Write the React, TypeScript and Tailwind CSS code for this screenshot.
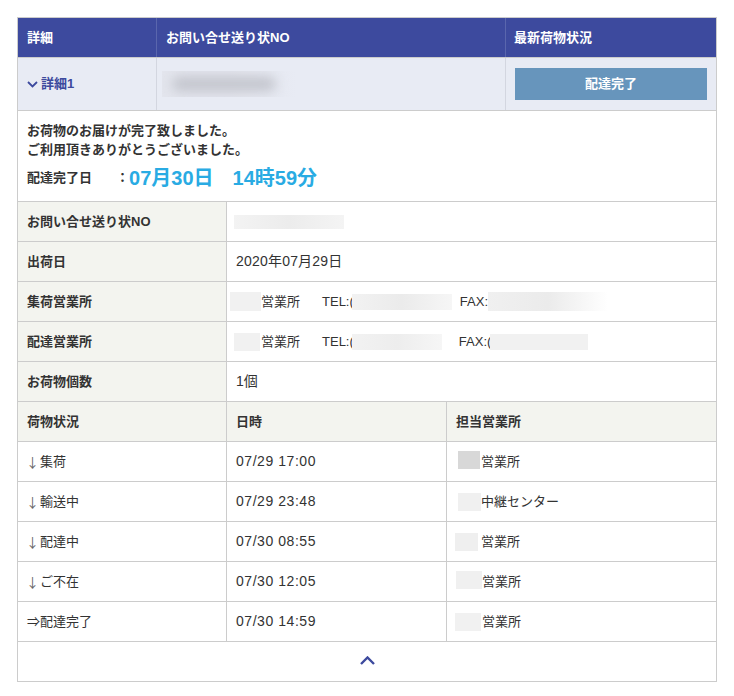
import { ReactNode } from "react";

const history = [
  { label: "集荷", time: "07/29 17:00", patch: "ml-[2px] mb-[4px] w-[22px] bg-[#d8d8d8]", office: "営業所", gap: "ml-[1px]" },
  { label: "輸送中", time: "07/29 23:48", patch: "ml-[2px] w-[23px] bg-[#f0f0f0]", office: "中継センター", gap: "ml-0" },
  { label: "配達中", time: "07/30 08:55", patch: "-ml-[1px] w-[23px] bg-[#efefef]", office: "営業所", gap: "ml-[3px]" },
  { label: "ご不在", time: "07/30 12:05", patch: "mb-[4px] w-[26px] bg-[#f0f0f0]", office: "営業所", gap: "ml-0" },
  { label: "", time: "07/30 14:59", patch: "-ml-[1px] w-[26px] bg-[#f1f1f1]", office: "営業所", gap: "ml-[1px]" },
];

function Patch({ className }: { className: string }) {
  return <span className={`relative block shrink-0 ${className}`} />;
}

function InfoRow({ label, children }: { label: string; children: ReactNode }) {
  return (
    <div className="flex h-10 border-b border-[#cccccc]">
      <div className="flex w-[209px] shrink-0 items-center border-r border-[#cccccc] bg-[#f3f4ef] pl-[9px] font-bold">
        {label}
      </div>
      <div className="flex flex-1 items-center pl-[9px]">{children}</div>
    </div>
  );
}

export default function App() {
  return (
    <div className="min-h-[696px] bg-white pt-[17px] pl-[17px] font-['Liberation_Sans','Noto_Sans_CJK_JP',sans-serif] text-[13px] text-[#333333]">
      <div className="w-[700px] border-x border-t border-[#cccccc]">
        {/* header */}
        <div className="flex h-10 border-b border-[#cccccc] bg-[#3d4a9e] font-bold text-white">
          <div className="flex w-[139px] shrink-0 items-center border-r border-[#5a66ad] pl-[9px]">詳細</div>
          <div className="flex w-[349px] shrink-0 items-center border-r border-[#5a66ad] pl-[9px]">お問い合せ送り状NO</div>
          <div className="flex flex-1 items-center pl-[8px]">最新荷物状況</div>
        </div>

        {/* detail */}
        <div className="flex h-[53px] border-b border-[#cccccc] bg-[#e8ebf4]">
          <div className="flex w-[139px] shrink-0 items-center border-r border-[#d3d6e0] pl-[9px] font-bold text-[#3d4a9e]">
            <svg width="11" height="7" viewBox="0 0 11 7" fill="none" stroke="#3d4a9e" strokeWidth="1.8" className="mr-[3px]">
              <path d="M1 1l4.5 4.5L10 1" />
            </svg>
            詳細1
          </div>
          <div className="flex w-[349px] shrink-0 items-center border-r border-[#d3d6e0] pl-[5px]">
            <span className="block h-[26px] w-[134px] overflow-hidden bg-gradient-to-r from-[#e3e5ed] via-[#e3e5ed] to-[#e8ebf4]">
              <span className="mx-[10px] my-[6px] block h-[14px] w-[104px] rounded-full bg-[#c2c4cc] blur-[6px]" />
            </span>
          </div>
          <div className="flex flex-1 items-center pl-[9px]">
            <div className="flex h-8 w-[192px] items-center justify-center bg-[#6795bc] font-bold text-white">配達完了</div>
          </div>
        </div>

        {/* message */}
        <div className="flex h-[91px] flex-col border-b border-[#cccccc] pt-[10px] pl-[9px] font-bold">
          <p className="leading-[19px]">お荷物のお届けが完了致しました。</p>
          <p className="leading-[19px]">ご利用頂きありがとうございました。</p>
          <div className="mt-[5px] flex items-center">
            <span>配達完了日</span>
            <span className="ml-[24px]">：</span>
            <span className="text-[20px] leading-[28px] text-[#29abe3]">07月30日</span>
            <span className="ml-[19px] text-[20px] leading-[28px] text-[#29abe3]">14時59分</span>
          </div>
        </div>

        <InfoRow label="お問い合せ送り状NO">
          <Patch className="-ml-[2px] h-[14px] w-[110px] bg-gradient-to-r from-[#f3f3f3] via-[#ececec] to-[#f4f4f4]" />
        </InfoRow>
        <InfoRow label="出荷日">
          <span className="text-[14px] tracking-[0.2px]">2020年07月29日</span>
        </InfoRow>
        <InfoRow label="集荷営業所">
          <Patch className="-ml-[6px] h-[19px] w-[31px] bg-[#f1f1f1]" />
          <span>営業所</span>
          <span className="ml-[22px]">TEL:(</span>
          <Patch className="-ml-[2px] h-[16px] w-[100px] bg-gradient-to-r from-[#f2f2f2] via-[#ebebeb] to-[#f6f6f6]" />
          <span className="ml-[8px]">FAX:</span>
          <Patch className="h-[19px] w-[120px] bg-gradient-to-r from-[#f0f0f0] via-[#ebebeb] to-white" />
        </InfoRow>
        <InfoRow label="配達営業所">
          <Patch className="-ml-[2px] h-[18px] w-[26px] bg-[#f1f1f1]" />
          <span className="ml-[1px]">営業所</span>
          <span className="ml-[22px]">TEL:(</span>
          <Patch className="-ml-[2px] h-[16px] w-[90px] bg-gradient-to-r from-[#f2f2f2] via-[#ededed] to-[#f6f6f6]" />
          <span className="ml-[17px]">FAX:(</span>
          <Patch className="-ml-[1px] h-[16px] w-[98px] bg-[#f1f1f1]" />
        </InfoRow>
        <InfoRow label="お荷物個数">
          <span className="text-[14px]">1個</span>
        </InfoRow>

        {/* history */}
        <div className="flex h-10 border-b border-[#cccccc] bg-[#f3f4ef] font-bold">
          <div className="flex w-[209px] shrink-0 items-center border-r border-[#cccccc] pl-[9px]">荷物状況</div>
          <div className="flex w-[220px] shrink-0 items-center border-r border-[#cccccc] pl-[9px]">日時</div>
          <div className="flex flex-1 items-center pl-[9px]">担当営業所</div>
        </div>
        {history.map((row) => (
          <div key={row.time} className="flex h-10 border-b border-[#cccccc]">
            <div className="flex w-[209px] shrink-0 items-center border-r border-[#cccccc] pl-[8px]">
              {row.label ? (
                <>
                  <span className="font-['Noto_Sans_CJK_JP',sans-serif] text-[#666666]">↓</span>
                  <span className="ml-[1px]">{row.label}</span>
                </>
              ) : (
                <span className="ml-[1px]">⇒配達完了</span>
              )}
            </div>
            <div className="flex w-[220px] shrink-0 items-center border-r border-[#cccccc] pl-[9px] text-[14px] tracking-[0.55px]">
              {row.time}
            </div>
            <div className="flex flex-1 items-center pl-[9px]">
              <Patch className={`h-[18px] ${row.patch}`} />
              <span className={row.gap}>{row.office}</span>
            </div>
          </div>
        ))}

        {/* collapse */}
        <div className="flex h-10 items-center justify-center border-b border-[#cccccc]">
          <svg width="15" height="9" viewBox="0 0 15 9" fill="none" stroke="#3d4a9e" strokeWidth="2.4" className="mb-[2px]">
            <path d="M1 8l6.5-6.5L14 8" />
          </svg>
        </div>
      </div>
    </div>
  );
}
